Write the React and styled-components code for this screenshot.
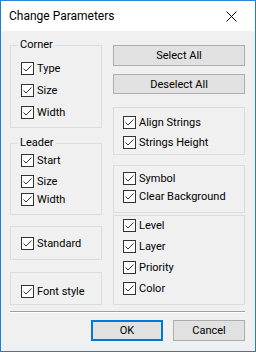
import React from "react";
import styled, { createGlobalStyle } from "styled-components";

const GlobalStyle = createGlobalStyle`
  html, body { margin: 0; padding: 0; background: #ffffff; }
  body { font-family: Roboto, "Noto Sans", "Liberation Sans", sans-serif; }
  * { box-sizing: border-box; }
`;

const Window = styled.div`
  width: 256px;
  height: 352px;
  background: #f0f0f0;
  border: 1px solid #1c7ed6;
  border-top-color: #2b86d9;
  display: flex;
  flex-direction: column;
  color: #000;
  font-size: 11px;
`;

const TitleBar = styled.div`
  height: 30px;
  background: #ffffff;
  display: flex;
  align-items: center;
  justify-content: space-between;
  padding-left: 8px;
  flex-shrink: 0;
`;

const Title = styled.span`
  font-size: 12px;
  color: #000;
`;

const CloseButton = styled.div`
  width: 46px;
  height: 30px;
  display: flex;
  align-items: center;
  justify-content: center;
  margin-right: 1px;
`;

const Body = styled.div`
  display: grid;
  grid-template-columns: 92px 132px;
  column-gap: 11px;
  align-items: start;
  padding: 14px 0 0 9px;
`;

const Column = styled.div`
  display: flex;
  flex-direction: column;
`;

const GroupBox = styled.div`
  position: relative;
  border: 1px solid #dcdcdc;
  margin-top: ${(p) => p.$mt || 0}px;
  padding: ${(p) => p.$pt}px 0 ${(p) => p.$pb}px ${(p) => p.$pl || 9}px;
  display: flex;
  flex-direction: column;
  gap: ${(p) => p.$gap || 0}px;
`;

const GroupLabel = styled.span`
  position: absolute;
  top: -9px;
  left: 7px;
  padding: 0 2px;
  background: #f0f0f0;
  line-height: 16px;
`;

const Row = styled.label`
  display: flex;
  align-items: center;
  height: 13px;
  gap: 3px;
  margin-top: ${(p) => p.$mt || 0}px;
  white-space: nowrap;
`;

const Box = styled.span`
  width: 13px;
  height: 13px;
  border: 1px solid #333333;
  background: #ffffff;
  display: inline-flex;
  align-items: center;
  justify-content: center;
  flex-shrink: 0;
`;

const Button = styled.button`
  font-family: inherit;
  font-size: 11px;
  color: #000;
  background: #e1e1e1;
  border: ${(p) => (p.$default ? "2px solid #0078d7" : "1px solid #adadad")};
  height: ${(p) => p.$h || 21}px;
  width: ${(p) => (p.$w ? `${p.$w}px` : "100%")};
  margin-top: ${(p) => p.$mt || 0}px;
  padding: 0;
  display: flex;
  align-items: center;
  justify-content: center;
`;

const Separator = styled.div`
  margin: 6px 10px 0 9px;
  height: 2px;
  border-top: 1px solid #a0a0a0;
  border-bottom: 1px solid #ffffff;
`;

const Footer = styled.div`
  display: flex;
  justify-content: flex-end;
  gap: 10px;
  padding: 7px 10px 0 0;
`;

const Check = ({ children, mt }) => (
  <Row $mt={mt}>
    <Box>
      <svg width="11" height="11" viewBox="0 0 11 11">
        <path d="M1.5 5.5 L4 8 L9.5 2.5" fill="none" stroke="#333" strokeWidth="1" />
      </svg>
    </Box>
    <span>{children}</span>
  </Row>
);

export default function App() {
  return (
    <>
      <GlobalStyle />
      <Window>
        <TitleBar>
          <Title>Change Parameters</Title>
          <CloseButton>
            <svg width="11" height="11" viewBox="0 0 11 11">
              <path d="M0.5 0.5 L10.5 10.5 M10.5 0.5 L0.5 10.5" stroke="#000" strokeWidth="1" />
            </svg>
          </CloseButton>
        </TitleBar>
        <Body>
          <Column>
            <GroupBox $pt={16} $pb={8} $gap={9} $pl={10}>
              <GroupLabel>Corner</GroupLabel>
              <Check>Type</Check>
              <Check>Size</Check>
              <Check>Width</Check>
            </GroupBox>
            <GroupBox $mt={15} $pt={10} $pb={8} $pl={10}>
              <GroupLabel>Leader</GroupLabel>
              <Check>Start</Check>
              <Check mt={8}>Size</Check>
              <Check mt={5}>Width</Check>
            </GroupBox>
            <GroupBox $mt={11} $pt={10} $pb={9} $pl={10}>
              <Check>Standard</Check>
            </GroupBox>
            <GroupBox $mt={12} $pt={12} $pb={6} $pl={10}>
              <Check>Font style</Check>
            </GroupBox>
          </Column>
          <Column>
            <Button $h={21}>Select All</Button>
            <Button $h={20} $mt={8}>Deselect All</Button>
            <GroupBox $mt={13} $pt={8} $pb={5} $gap={7}>
              <Check>Align Strings</Check>
              <Check>Strings Height</Check>
            </GroupBox>
            <GroupBox $mt={10} $pt={6} $pb={9} $gap={5}>
              <Check>Symbol</Check>
              <Check>Clear Background</Check>
            </GroupBox>
            <GroupBox $mt={2} $pt={3} $pb={9} $gap={8}>
              <Check>Level</Check>
              <Check>Layer</Check>
              <Check>Priority</Check>
              <Check>Color</Check>
            </GroupBox>
          </Column>
        </Body>
        <Separator />
        <Footer>
          <Button $default $w={72}>OK</Button>
          <Button $w={72}>Cancel</Button>
        </Footer>
      </Window>
    </>
  );
}
